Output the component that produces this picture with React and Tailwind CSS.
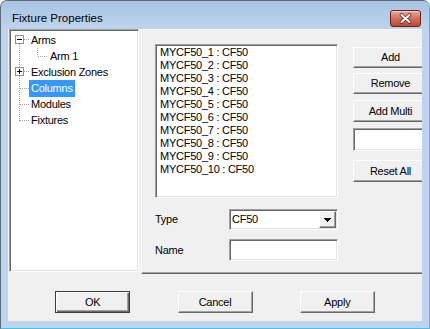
import React from 'react';

const raised =
  'bg-[#f0f0f0] border border-t-white border-l-white border-r-[#696969] border-b-[#696969] shadow-[inset_-1px_-1px_0_#a0a0a0]';
const defaultBtn =
  'bg-[#f0f0f0] border border-[#3c3c3c] shadow-[inset_1px_1px_0_#fff,inset_-1px_-1px_0_#696969,inset_-2px_-2px_0_#a0a0a0]';
const sunken =
  'bg-white border border-t-[#a0a0a0] border-l-[#a0a0a0] border-r-white border-b-white shadow-[inset_1px_1px_0_#696969,inset_-1px_-1px_0_#e3e3e3]';

const DOT = '#a0a0a0';

function VLine({ x, y1, y2 }) {
  return <line x1={x} x2={x} y1={y1} y2={y2} stroke={DOT} strokeDasharray="1 1" />;
}

function HLine({ y, x1, x2 }) {
  return <line x1={x1} x2={x2} y1={y} y2={y} stroke={DOT} strokeDasharray="1 1" />;
}

function Box({ plus }) {
  return (
    <g>
      <rect x="5.5" y="3.5" width="8" height="8" fill="white" stroke="#919191" />
      <line x1="7" x2="12" y1="7.5" y2="7.5" stroke="black" />
      {plus && <line x1="9.5" x2="9.5" y1="5" y2="10" stroke="black" />}
    </g>
  );
}

function TreeRow({ kind, label, selected }) {
  let gutter;
  if (kind === 'root') {
    gutter = (
      <svg width="19" height="16" shapeRendering="crispEdges">
        <Box />
        <HLine y={7.5} x1={14} x2={19} />
        <VLine x={9.5} y1={12} y2={16} />
      </svg>
    );
  } else if (kind === 'child') {
    gutter = (
      <svg width="38" height="16" shapeRendering="crispEdges">
        <VLine x={9.5} y1={0} y2={16} />
        <VLine x={27.5} y1={0} y2={8} />
        <HLine y={8.5} x1={28} x2={38} />
      </svg>
    );
  } else if (kind === 'plus') {
    gutter = (
      <svg width="19" height="16" shapeRendering="crispEdges">
        <VLine x={9.5} y1={0} y2={4} />
        <VLine x={9.5} y1={12} y2={16} />
        <Box plus />
        <HLine y={7.5} x1={14} x2={19} />
      </svg>
    );
  } else {
    gutter = (
      <svg width="19" height="16" shapeRendering="crispEdges">
        <VLine x={9.5} y1={0} y2={kind === 'last' ? 9 : 16} />
        <HLine y={8.5} x1={10} x2={19} />
      </svg>
    );
  }
  return (
    <div className="flex h-[16px] items-center">
      {gutter}
      <span
        className={`px-[2px] h-[17px] leading-[17px] whitespace-nowrap ${
          selected ? 'bg-[#3399ff] text-white' : ''
        }`}
      >
        {label}
      </span>
    </div>
  );
}

function Btn({ children, isDefault, className = '' }) {
  return (
    <button
      type="button"
      className={`${isDefault ? defaultBtn : raised} w-[75px] shrink-0 flex items-center justify-center ${className}`}
    >
      {children}
    </button>
  );
}

const items = Array.from({ length: 10 }, (_, i) => `MYCF50_${i + 1} : CF50`);

export default function App() {
  return (
    <div className="w-[430px] h-[329px] flex flex-col bg-[#bdd4ec] border border-[#5d6b7a] border-r-[#3cc6e2] border-b-[#3cc6e2] rounded-t-[7px] overflow-hidden font-['Liberation_Sans',Arial,sans-serif] text-[11px] tracking-[-0.25px] text-black">
      {/* title bar */}
      <div className="h-[28px] shrink-0 flex items-start justify-between pl-[11px] pr-[8px] pt-[9px] bg-linear-to-b from-[#a9c3e1] to-[#bdd4ec]">
        <span className="text-[11.5px] tracking-normal leading-[17px]">Fixture Properties</span>
        <div className="w-[31px] h-[17px] rounded-[3px] border border-[#6b1f17] bg-linear-to-b from-[#e8ab9d] via-[#d26e5c] to-[#c24738] shadow-[inset_0_1px_0_rgba(255,255,255,0.45)] flex items-center justify-center">
          <svg width="13" height="11" viewBox="0 0 13 11">
            <path d="M2.5 2 L10.5 9 M10.5 2 L2.5 9" stroke="#5a2a26" strokeWidth="3.6" strokeLinecap="round" />
            <path d="M2.5 2 L10.5 9 M10.5 2 L2.5 9" stroke="white" strokeWidth="2" strokeLinecap="round" />
          </svg>
        </div>
      </div>

      <div className="flex-1 flex flex-col px-[7px] pb-[7px]">
        <div className="flex-1 bg-[#f0f0f0] flex flex-col overflow-hidden">
          <div className="h-[245px] shrink-0 flex items-start">
            {/* tree */}
            <div className={`${sunken} ml-[1px] w-[130px] h-[243px] shrink-0 pt-[2px]`}>
              <TreeRow kind="root" label="Arms" />
              <TreeRow kind="child" label="Arm 1" />
              <TreeRow kind="plus" label="Exclusion Zones" />
              <TreeRow kind="leaf" label="Columns" selected />
              <TreeRow kind="leaf" label="Modules" />
              <TreeRow kind="last" label="Fixtures" />
            </div>

            {/* property page */}
            <div className="ml-[2px] flex-1 min-w-0 h-[245px] border-t border-l border-t-white border-l-white border-b border-b-[#696969] shadow-[inset_0_-1px_0_#a0a0a0] overflow-hidden flex flex-col pl-[13px]">
              <div className="flex items-start">
                <div className={`${sunken} mt-[14px] w-[183px] h-[154px] shrink-0 pt-[1px] pl-[4px]`}>
                  {items.map((t) => (
                    <div key={t} className="h-[13px] leading-[13px] whitespace-nowrap">
                      {t}
                    </div>
                  ))}
                </div>
                <div className="ml-[15px] flex flex-col shrink-0">
                  <Btn className="mt-[17px] h-[21px] border-l-[#3c3c3c]">Add</Btn>
                  <Btn className="mt-[5px] h-[21px]">Remove</Btn>
                  <Btn className="mt-[6px] h-[22px]">Add Multi</Btn>
                  <div className={`${sunken} mt-[6px] h-[23px] w-[75px]`} />
                  <Btn className="mt-[9px] h-[22px]">Reset All</Btn>
                </div>
              </div>

              <div className="flex items-center mt-[11px] h-[21px]">
                <span className="w-[74px] shrink-0">Type</span>
                <div className={`${sunken} w-[109px] h-[21px] shrink-0 flex items-center pl-[2px]`}>
                  <span>CF50</span>
                  <div className={`${raised} ml-auto mr-[1px] w-[17px] h-[17px] flex items-center justify-center`}>
                    <svg width="7" height="4" viewBox="0 0 7 4" shapeRendering="crispEdges">
                      <path d="M0 0 H7 L3.5 4 Z" fill="black" />
                    </svg>
                  </div>
                </div>
              </div>

              <div className="flex items-center mt-[9px] h-[22px]">
                <span className="w-[74px] shrink-0">Name</span>
                <div className={`${sunken} w-[109px] h-[22px] shrink-0`} />
              </div>
            </div>
          </div>

          {/* bottom buttons */}
          <div className="flex-1 flex justify-evenly items-start pt-[17px]">
            <Btn isDefault className="h-[22px]">OK</Btn>
            <Btn className="h-[22px]">Cancel</Btn>
            <Btn className="h-[22px]">Apply</Btn>
          </div>
        </div>
      </div>
    </div>
  );
}
